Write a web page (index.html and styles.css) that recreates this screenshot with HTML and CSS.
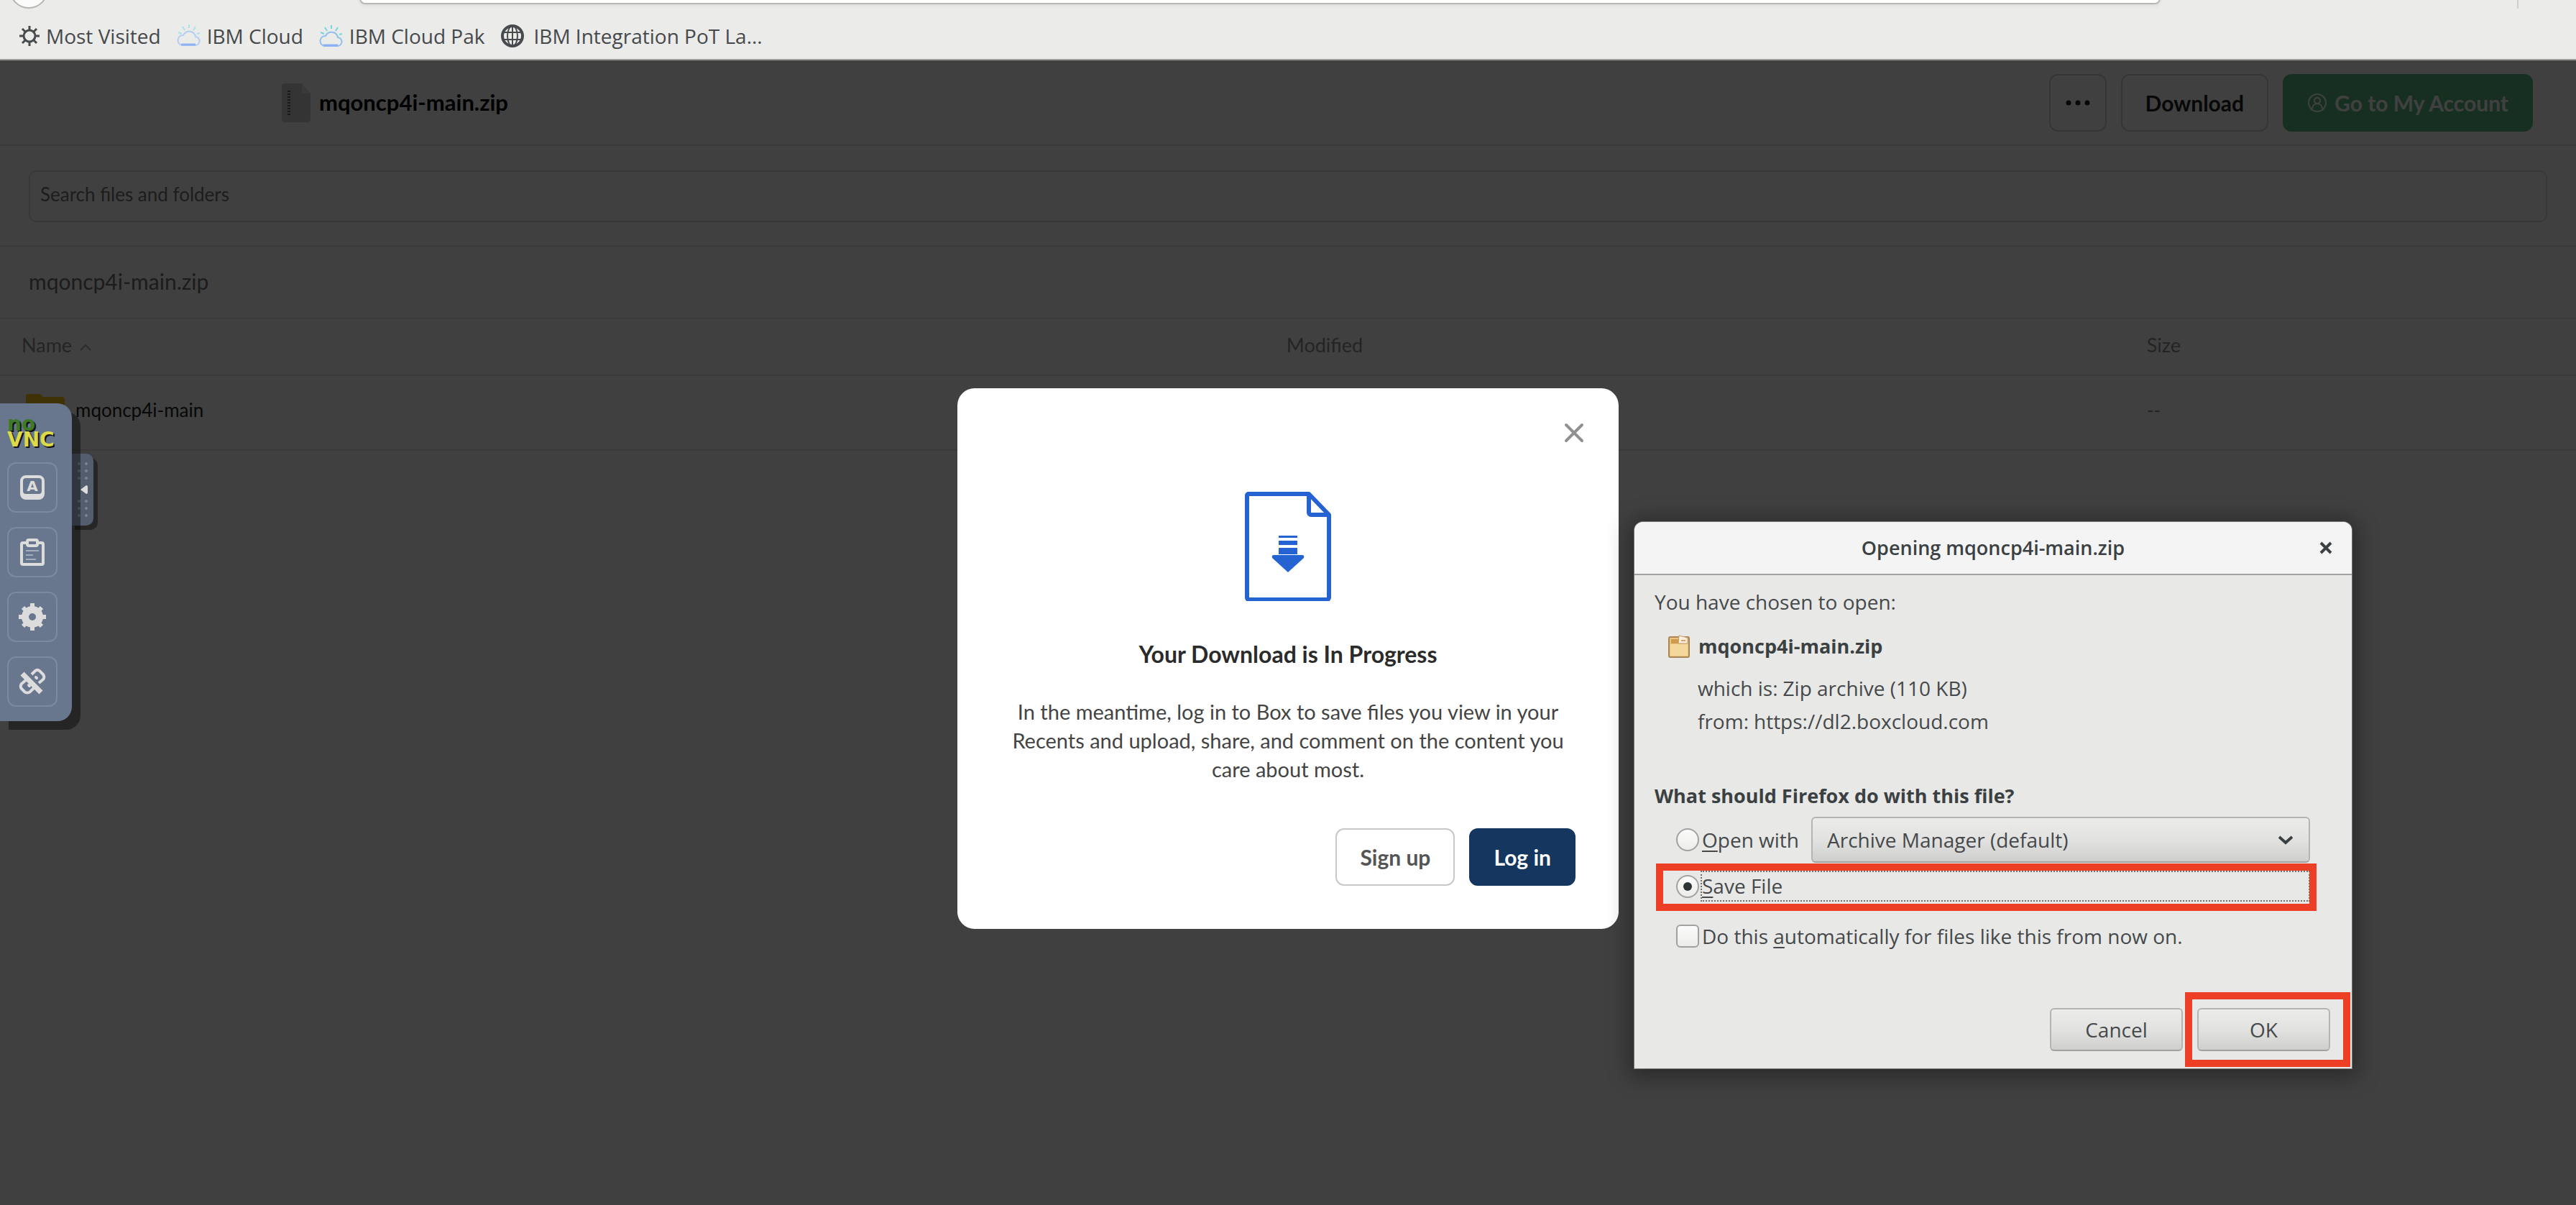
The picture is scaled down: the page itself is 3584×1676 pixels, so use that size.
FILE: index.html
```html
<!DOCTYPE html>
<html lang="en">
<head>
<meta charset="utf-8">
<title>mqoncp4i-main.zip</title>
<link rel="stylesheet" href="styles.css">
</head>
<body>
<div class="browser">
  <header class="chrome">
    <div class="nav">
      <button class="back" aria-label="Back"></button>
      <input class="url" type="text" aria-label="Address">
      <span class="nav-sep"></span>
    </div>
    <nav class="bookmarks">
      <a href="#" class="bm">
        <svg width="30" height="30" viewBox="0 0 30 30" fill="none" stroke="#474b4d"><circle cx="15" cy="15" r="8" stroke-width="3"/><g stroke-width="3"><path d="M15 1v5M15 24v5M1 15h5M24 15h5M5 5l4 4M21 21l4 4M25 5l-4 4M9 21l-4 4"/></g></svg>
        Most Visited</a>
      <a href="#" class="bm">
        <svg width="34" height="34" viewBox="0 0 34 34" fill="none"><path d="M8 30h17a6 6 0 0 0 1-12a9 9 0 0 0-17-2a7 7 0 0 0-1 14z" stroke="#b4cdf0" stroke-width="2"/><path d="M6 29h20" stroke="#8fb2f3" stroke-width="3"/><path d="M17 1v5M8 4l3 5M2 12l5 2M26 4l-3 5M32 13l-4 1" stroke="#a9e2ea" stroke-width="2"/></svg>
        IBM Cloud</a>
      <a href="#" class="bm">
        <svg width="34" height="34" viewBox="0 0 34 34" fill="none"><path d="M8 31h17a6 6 0 0 0 1-12a9 9 0 0 0-17-2a7 7 0 0 0-1 14z" stroke="#8fc0ee" stroke-width="2"/><path d="M6 30h20" stroke="#8ab0f5" stroke-width="3"/><path d="M17 2v5M8 5l3 5M2 12l5 2M26 5l-3 5M32 14l-4 1" stroke="#74d6e2" stroke-width="2"/></svg>
        IBM Cloud Pak</a>
      <a href="#" class="bm bm-wide">
        <svg width="34" height="34" viewBox="0 0 34 34" fill="none" stroke="#474b4d"><circle cx="17" cy="17" r="14" stroke-width="4"/><ellipse cx="17" cy="17" rx="7" ry="14" stroke-width="2"/><path d="M17 3v28M4 12h26M4 22h26" stroke-width="2"/></svg>
        IBM Integration PoT La...</a>
    </nav>
  </header>

  <main class="page">
    <div class="page-head">
      <svg width="40" height="54" viewBox="0 0 40 54"><path d="M4 0h24l12 14v36a4 4 0 0 1-4 4H4a4 4 0 0 1-4-4V4a4 4 0 0 1 4-4z" fill="#cfcfcf"/><path d="M28 0l12 14H30a2 2 0 0 1-2-2z" fill="#e4e4e4"/><path d="M10 10v36" stroke="#666" stroke-width="4" stroke-dasharray="2 2"/></svg>
      <h1>mqoncp4i-main.zip</h1>
      <div class="actions">
        <button class="btn btn-more" aria-label="More options"><svg width="34" height="8" viewBox="0 0 34 8" fill="#222"><circle cx="4" cy="4" r="3.500"/><circle cx="17" cy="4" r="3.500"/><circle cx="30" cy="4" r="3.500"/></svg></button>
        <button class="btn btn-download">Download</button>
        <button class="btn btn-account"><svg width="28" height="28" viewBox="0 0 28 28" fill="none" stroke="#fff" stroke-width="2"><circle cx="14" cy="14" r="12"/><circle cx="14" cy="11" r="4"/><path d="M7 22c1-9 13-9 14 0"/></svg>Go to My Account</button>
      </div>
    </div>
    <div class="search"><input type="text" placeholder="Search files and folders" aria-label="Search files and folders"></div>
    <div class="crumb">mqoncp4i-main.zip</div>
    <table class="files">
      <colgroup><col class="c-name"><col class="c-mod"><col class="c-size"></colgroup>
      <thead><tr><th>Name <svg width="16" height="10" viewBox="0 0 16 10" fill="none" stroke="#aaa" stroke-width="2"><path d="M1 9l7-7l7 7"/></svg></th><th>Modified</th><th>Size</th></tr></thead>
      <tbody><tr><td><span class="file"><svg width="54" height="44" viewBox="0 0 54 44"><path d="M4 0h16l4 4h26a4 4 0 0 1 4 4v32a4 4 0 0 1-4 4H4a4 4 0 0 1-4-4V4a4 4 0 0 1 4-4z" fill="#f5c518"/></svg>mqoncp4i-main</span></td><td></td><td class="dim">--</td></tr></tbody>
    </table>
    <div class="scrim">
      <section class="modal" role="dialog" aria-labelledby="dl-title">
        <button class="modal-close" aria-label="Close"><svg width="28" height="28" viewBox="0 0 28 28" stroke="#909090" stroke-width="4" stroke-linecap="round"><path d="M3 3l22 22M25 3L3 25"/></svg></button>
        <svg class="doc" width="120" height="152" viewBox="0 0 120 152" fill="none" stroke="#2463d1" stroke-width="6" stroke-linejoin="round"><path d="M5 3h84l28 29v115a3 3 0 0 1-3 3H5a3 3 0 0 1-2-3V5a2 2 0 0 1 2-2z"/><path d="M89 4v25a3 3 0 0 0 3 3h25"/><g fill="#2463d1" stroke="none"><path d="M47 61h26v3H47zM47 68h26v6H47zM47 78h26v9H47z"/><path d="M40 88h40q3 0 2 4L60 112L38 92q-1-4 2-4z"/></g></svg>
        <h2 id="dl-title">Your Download is In Progress</h2>
        <p>In the meantime, log in to Box to save files you view in your Recents and upload, share, and comment on the content you care about most.</p>
        <div class="modal-actions"><button class="btn btn-signup">Sign up</button><button class="btn btn-login">Log in</button></div>
      </section>
    </div>
  </main>
</div>

<aside class="vnc">
  <button class="vnc-handle" aria-label="Toggle panel"><svg width="24" height="76" viewBox="0 0 24 76"><g fill="#7b8494"><circle cx="8" cy="2" r="2"/><circle cx="18" cy="2" r="2"/><circle cx="8" cy="12" r="2"/><circle cx="18" cy="12" r="2"/><circle cx="8" cy="22" r="2"/><circle cx="18" cy="22" r="2"/><circle cx="8" cy="54" r="2"/><circle cx="18" cy="54" r="2"/><circle cx="8" cy="64" r="2"/><circle cx="18" cy="64" r="2"/><circle cx="8" cy="74" r="2"/><circle cx="18" cy="74" r="2"/></g><path d="M10 38l8-6q2 0 2 2v8q0 2-2 2z" fill="#dcdcdc"/></svg></button>
  <div class="vnc-bar">
    <div class="vnc-logo"><span class="no">no</span><span class="v">VNC</span></div>
    <button class="tool" aria-label="Keys"><svg width="34" height="34" viewBox="0 0 34 34"><path fill="#dcdcdc" fill-rule="evenodd" d="M8 0h18a8 8 0 0 1 8 8v18a8 8 0 0 1-8 8H8a8 8 0 0 1-8-8V8a8 8 0 0 1 8-8zM8 4a4 4 0 0 0-4 4v14a4 4 0 0 0 4 4h18a4 4 0 0 0 4-4V8a4 4 0 0 0-4-4z"/><text x="17" y="22" text-anchor="middle" class="key">A</text></svg></button>
    <button class="tool" aria-label="Clipboard"><svg width="34" height="38" viewBox="0 0 34 38" fill="none"><rect x="2" y="6" width="30" height="30" rx="2" stroke="#dcdcdc" stroke-width="4"/><rect x="10" y="2" width="14" height="8" rx="2" fill="#69778e" stroke="#dcdcdc" stroke-width="4"/><path d="M8 17h18M8 23h10M8 29h14" stroke="#a3adbb" stroke-width="2"/></svg></button>
    <button class="tool" aria-label="Settings"><svg width="38" height="38" viewBox="0 0 38 38" fill="none" stroke="#dcdcdc"><circle cx="19" cy="19" r="10" stroke-width="10"/><path d="M19 0v7M19 31v7M0 19h7M31 19h7M6 6l4 4M28 28l4 4M32 6l-4 4M10 28l-4 4" stroke-width="6"/></svg></button>
    <button class="tool" aria-label="Disconnect"><svg width="38" height="38" viewBox="0 0 38 38" fill="none" stroke="#dcdcdc" stroke-width="4"><path d="M5 8l26 26" stroke-width="7"/><path d="M18 9l5-5a5 5 0 0 1 6 0l5 5a6 6 0 0 1 0 7l-6 5"/><path d="M10 17l-6 5a6 6 0 0 0 0 7l4 4a6 6 0 0 0 8 0l5-5"/><path d="M24 13l1 1M14 24l1 1" stroke-linecap="round"/></svg></button>
  </div>
</aside>

<section class="dialog" role="dialog" aria-labelledby="open-title">
  <header class="dlg-bar">
    <h2 id="open-title">Opening mqoncp4i-main.zip</h2>
    <button class="dlg-close" aria-label="Close"><svg width="18" height="18" viewBox="0 0 18 18" stroke="#3b4143" stroke-width="4"><path d="M2 2l14 14M16 2L2 16"/></svg></button>
  </header>
  <form class="dlg-body">
    <p>You have chosen to open:</p>
    <div class="what">
      <svg width="30" height="34" viewBox="0 0 30 34"><rect x="1" y="4" width="28" height="28" rx="2" fill="#e8c583" stroke="#ad8550" stroke-width="2"/><path d="M4 7h10v6H4z" fill="#cf9a49"/><path d="M3 14h24v16H3z" fill="#f4d79c"/><path d="M15 2l12 3v8H14z" fill="#f9eedd" stroke="#c29a62"/><path d="M18 9h6" stroke="#d9a25c" stroke-width="2"/></svg>
      <strong>mqoncp4i-main.zip</strong>
    </div>
    <dl>
      <div><dt>which is:</dt><dd>Zip archive (110 KB)</dd></div>
      <div><dt>from:</dt><dd>https://dl2.boxcloud.com</dd></div>
    </dl>
    <h3>What should Firefox do with this file?</h3>
    <div class="opt opt-open">
      <input type="radio" name="act" id="r-open"><label for="r-open"><u>O</u>pen with</label>
      <div class="pick"><select aria-label="Application"><option>Archive Manager (default)</option></select><svg width="20" height="13" viewBox="0 0 20 13" fill="none" stroke="#3b4143" stroke-width="4"><path d="M1 2l9 8l9-8"/></svg></div>
    </div>
    <div class="opt opt-save">
      <input type="radio" name="act" id="r-save" checked><label for="r-save"><u>S</u>ave File</label>
      <span class="mark mark-save"></span>
    </div>
    <div class="opt opt-auto">
      <input type="checkbox" id="c-auto"><label for="c-auto">Do this <u>a</u>utomatically for files like this from now on.</label>
    </div>
    <div class="dlg-actions">
      <button type="button">Cancel</button>
      <div class="ok"><button type="button">OK</button><span class="mark mark-ok"></span></div>
    </div>
  </form>
</section>
</body>
</html>
```
FILE: styles.css
```css
* { box-sizing: border-box; }
body { margin: 0; font-family: Lato, sans-serif; font-size: 28px; background: #fff; }
button, input, select { font: inherit; margin: 0; }
h1, h2, h3, p, dl, dd { margin: 0; }
svg { display: block; flex: none; }

.browser { display: flex; flex-direction: column; min-height: 100vh; }

/* Browser toolbar */
.chrome { height: 84px; background: #ebebe9; border-bottom: 2px solid #9b9b98; display: flex; flex-direction: column; font-family: "Open Sans", sans-serif; }
.nav { height: 14px; display: flex; align-items: flex-end; padding: 0 80px 2px 13px; }
.back { width: 54px; height: 54px; border-radius: 50%; border: 2px solid #b5b5b2; background: #fbfbfb; flex: none; }
.url { flex: 1; margin: 0 496px 6px 433px; height: 40px; border: 2px solid #b8b8b5; border-radius: 8px; background: #fff; box-shadow: 0 2px 4px #dcdcda; }
.nav-sep { width: 2px; height: 40px; background: #cfcfcc; }
.bookmarks { flex: 1; display: flex; align-items: center; gap: 22px; padding: 4px 26px 0; }
.bm { display: flex; align-items: center; gap: 8px; color: #45494b; text-decoration: none; font-size: 28px; line-height: 36px; white-space: nowrap; }
.bm-wide { gap: 12px; }

/* File page */
.page { flex: 1; position: relative; color: #222; }
.page-head { height: 119px; padding: 0 60px 0 392px; border-bottom: 2px solid #e8e8e8; display: flex; align-items: center; gap: 12px; }
.page-head h1 { padding-bottom: 2px; font-size: 31px; line-height: 40px; font-weight: 700; color: #000; }
.actions { margin-left: auto; display: flex; gap: 20px; }
.btn { height: 80px; border-radius: 12px; font-size: 30px; font-weight: 700; border: 2px solid #d3d3d3; background: #fff; color: #222; display: flex; align-items: center; justify-content: center; padding: 0 32px; }
.btn-more { padding: 0; width: 80px; }
.btn-account { background: #5cbc80; border-color: #5cbc80; color: #fff; gap: 10px; }
.search { padding: 34px 40px 32px; border-bottom: 2px solid #e8e8e8; }
.search input { display: block; width: 100%; height: 72px; border: 2px solid #dedede; border-radius: 10px; padding: 0 14px 6px; font-size: 26px; background: #fff; }
.search input::placeholder { color: #767676; opacity: 1; }
.crumb { height: 101px; line-height: 97px; padding-left: 40px; font-size: 30px; color: #6f6f6f; border-bottom: 2px solid #e8e8e8; }
.files { width: 100%; border-collapse: collapse; table-layout: fixed; }
.c-name { width: 49.1%; }
.c-mod { width: 33.4%; }
.files th { height: 78px; padding: 0 30px 6px; text-align: left; font-size: 27px; font-weight: 400; color: #8f8f8f; border-bottom: 2px solid #e8e8e8; }
.files th svg { display: inline-block; margin-left: 4px; vertical-align: middle; }
.files td { height: 104px; padding: 0 30px 8px; border-bottom: 2px solid #e8e8e8; font-size: 26px; }
.files .dim { color: #8f8f8f; }
.file { display: flex; align-items: center; gap: 15px; padding-left: 6px; }

/* Download prompt */
.scrim { position: absolute; inset: 0; background: rgba(0, 0, 0, .75); display: flex; justify-content: center; align-items: flex-start; padding-top: 456px; }
.modal { width: 920px; padding: 46px 60px 60px; border-radius: 24px; background: #fff; display: flex; flex-direction: column; align-items: center; color: #2b2b2b; }
.modal-close { align-self: flex-end; width: 32px; height: 32px; padding: 2px; margin-right: -14px; border: 0; background: none; }
.doc { margin-top: 66px; }
.modal h2 { margin-top: 54px; font-size: 32px; line-height: 40px; }
.modal p { margin-top: 40px; font-size: 29px; line-height: 40px; text-align: center; color: #444; }
.modal-actions { margin-top: 62px; align-self: stretch; display: flex; justify-content: flex-end; gap: 20px; }
.btn-signup { color: #555; border-color: #c8c8c8; }
.btn-login { background: #14365f; border-color: #14365f; color: #fff; }

/* Remote-session panel */
.vnc { position: absolute; left: 0; top: 561px; }
.vnc-bar { position: relative; width: 100px; padding: 18px 10px 20px; border-radius: 0 20px 20px 0; background: #69778e; box-shadow: 12px 12px 0 rgba(0, 0, 0, .42); display: flex; flex-direction: column; align-items: flex-start; gap: 20px; }
.vnc-logo { height: 44px; display: flex; flex-direction: column; font: 700 28px/22px "DejaVu Sans", sans-serif; text-shadow: 2px 2px 0 #111; }
.vnc-logo .no { color: #3c7a28; }
.vnc-logo .v { color: #dcd94a; }
.tool { width: 70px; height: 70px; padding: 0; border: 2px solid #7d899d; border-radius: 12px; background: none; display: grid; place-items: center; }
.key { font: 700 20px "DejaVu Sans", sans-serif; fill: #dcdcdc; }
.vnc-handle { position: absolute; left: 98px; top: 70px; width: 32px; height: 100px; padding: 0 0 0 4px; border: 0; border-radius: 0 10px 10px 0; background: #535d6e; box-shadow: 6px 6px 0 #262626; display: flex; align-items: center; }

/* Open / save dialog */
.dialog { position: absolute; left: 2274px; top: 726px; width: 998px; border-radius: 12px 12px 0 0; background: #e8e8e6; color: #45494b; font-family: "Open Sans", sans-serif; font-size: 28px; line-height: 46px; box-shadow: 0 0 0 1px #777, 0 4px 30px 8px rgba(0, 0, 0, .35); }
.dlg-bar { height: 74px; border-bottom: 2px solid #a1a19f; border-radius: 12px 12px 0 0; background: #f4f4f4; display: grid; grid-template-columns: 72px 1fr 72px; align-items: center; text-align: center; }
.dlg-bar h2 { grid-column: 2; font-size: 27px; font-weight: 600; color: #3b4143; }
.dlg-close { border: 0; background: none; padding: 0; display: grid; place-items: center; }
.dlg-body { padding: 14px 30px 24px 28px; }
.what { margin-top: 16px; padding-left: 19px; display: flex; align-items: center; gap: 12px; }
.what strong, h3 { font-size: 27px; font-weight: 700; color: #3b4143; }
dl { margin-top: 12px; padding-left: 60px; }
dl div { display: flex; gap: 7px; }
h3 { margin-top: 58px; }
.opt { position: relative; display: flex; align-items: center; padding-left: 30px; }
.opt input { appearance: none; width: 32px; height: 32px; border: 2px solid #a1a19f; background: linear-gradient(#fbfbfb, #ececea); flex: none; }
.opt input[type=radio] { border-radius: 50%; display: grid; place-items: center; }
.opt input[type=checkbox] { border-radius: 6px; }
.opt input[type=radio]:checked::before { content: ""; width: 12px; height: 12px; border-radius: 50%; background: #2e3436; }
.opt label { margin-left: 2px; padding-left: 2px; }
u { text-decoration-thickness: 2px; text-underline-offset: 4px; }
.opt-open { margin-top: 6px; padding-right: 28px; }
.pick { flex: 1; margin-left: 17px; display: grid; align-items: center; }
.pick select, .pick svg { grid-area: 1 / 1; }
.pick svg { justify-self: end; margin-right: 24px; pointer-events: none; }
.pick select, .dlg-actions button { border: 2px solid #b4b4b1; border-bottom-color: #a1a19f; border-radius: 6px; background: linear-gradient(#ebebea, #e2e2e1 50%, #cfcfcd); color: #45494b; }
.pick select { appearance: none; height: 64px; padding: 0 20px; }
.opt-save { margin-top: 11px; padding-right: 28px; }
.opt-save label { flex: 1; height: 43px; line-height: 38px; border: 2px dotted #6d6d6d; padding-left: 0; }
.opt-auto { margin-top: 25px; }
.dlg-actions { margin-top: 77px; display: flex; justify-content: flex-end; gap: 20px; }
.dlg-actions button { width: 185px; height: 60px; padding: 0; }
.ok { position: relative; }
.mark { position: absolute; border: 10px solid #ec3f26; pointer-events: none; }
.mark-save { inset: -10px 19px -13px 2px; }
.mark-ok { inset: -22px -28px -22px -17px; }
```
